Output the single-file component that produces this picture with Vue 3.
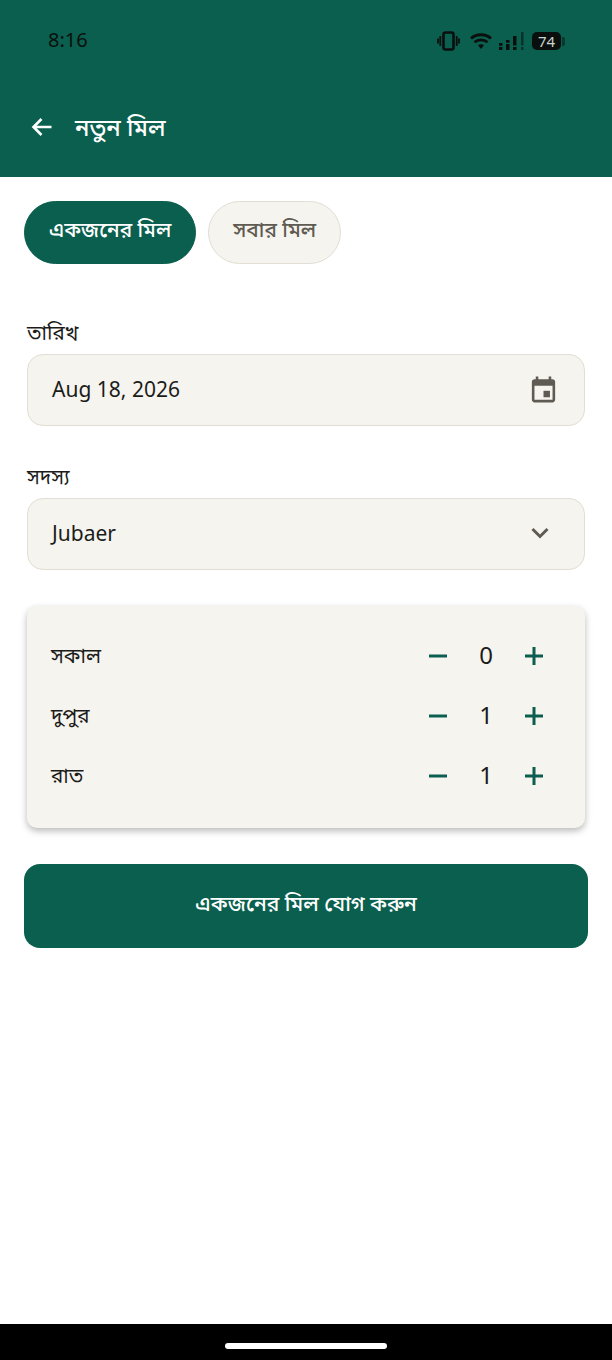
<script setup>
const meals = [
  { name: 'সকাল', count: 0 },
  { name: 'দুপুর', count: 1 },
  { name: 'রাত', count: 1 }
];
</script>

<template>
  <div class="screen">
    <header class="app-header">
      <div class="status-bar">
        <span class="clock">8:16</span>
        <div class="status-icons">
          <svg class="vibrate" width="23" height="20" viewBox="0 0 23 20">
            <rect x="6.5" y="1.5" width="10" height="17" rx="2" fill="none" stroke="#0a0f0d" stroke-width="2.6" />
            <path d="M3.3 5v10M1 7.5v5M19.7 5v10M22 7.5v5" stroke="#0a0f0d" stroke-width="1.8" fill="none" />
          </svg>
          <svg class="wifi" width="22" height="16" viewBox="0 0 22 16">
            <path d="M1 5.5C6.5 .5 15.5 .5 21 5.5M4.5 9.3C8 6 14 6 17.5 9.3" stroke="#0a0f0d" stroke-width="2.8" fill="none" />
            <path d="M8 12.2L11 16l3-3.800C12 11 10 11 8 12.2z" fill="#0a0f0d" />
          </svg>
          <svg class="signal" width="26" height="18" viewBox="0 0 26 18">
            <path d="M0 11h3.500v2.800H0zM0 15h3.500v3H0zM7 8h3.500v2.800H7zM7 12h3.500v6H7zM14 4h3.500v9.500H14zM14 15h3.500v3H14z" fill="#0a0f0d" />
            <path d="M22 0h2.500v13.500H22zM22 15h2.500v3H22z" fill="#0a0f0d" opacity=".55" />
          </svg>
          <div class="battery">
            <span class="battery-body">74</span>
            <span class="battery-tip"></span>
          </div>
        </div>
      </div>
      <div class="title-row">
        <svg class="back-icon" width="24" height="24" viewBox="0 0 24 24">
          <path d="M21.5 12H4M11.5 4L3.500 12l8 8" fill="none" stroke="#fff" stroke-width="2.6" />
        </svg>
        <h1 class="title">নতুন মিল</h1>
      </div>
    </header>

    <main class="content">
      <div class="tabs">
        <button class="tab tab-active">একজনের মিল</button>
        <button class="tab">সবার মিল</button>
      </div>

      <form class="form" @submit.prevent>
        <label class="field-label">তারিখ</label>
        <div class="field">
          <span>Aug 18, 2026</span>
          <svg class="calendar-icon" width="31" height="31" viewBox="0 0 24 24">
            <path d="M19 4h-1V2h-2v2H8V2H6v2H5c-1.100 0-2 .9-2 2v14c0 1.100.9 2 2 2h14c1.100 0 2-.9 2-2V6c0-1.100-.9-2-2-2zm0 16H5V9h14v11z" fill="#5f5b52" />
            <path d="M12 13h5v5h-5z" fill="#5f5b52" />
          </svg>
        </div>

        <label class="field-label member-label">সদস্য</label>
        <div class="field">
          <span>Jubaer</span>
          <svg class="chevron-icon" width="24" height="24" viewBox="0 0 24 24">
            <path d="M4.5 7L12 14.5 19.5 7" fill="none" stroke="#5f5b52" stroke-width="3" />
          </svg>
        </div>

        <section class="meal-card">
          <div v-for="meal in meals" :key="meal.name" class="meal-row">
            <span class="meal-name">{{ meal.name }}</span>
            <div class="stepper">
              <svg width="24" height="24" viewBox="0 0 24 24">
                <path d="M3 12h18" stroke="#0b5e4f" stroke-width="3" />
              </svg>
              <span class="count">{{ meal.count }}</span>
              <svg width="24" height="24" viewBox="0 0 24 24">
                <path d="M3 12h18M12 3v18" stroke="#0b5e4f" stroke-width="3" />
              </svg>
            </div>
          </div>
        </section>
      </form>

      <button class="submit-btn">একজনের মিল যোগ করুন</button>
    </main>

    <footer class="nav-bar">
      <span class="home-indicator"></span>
    </footer>
  </div>
</template>

<style scoped>
.screen {
  display: flex;
  flex-direction: column;
  width: 612px;
  height: 1360px;
  background: #fff;
  font-family: "Noto Sans", "Noto Sans Bengali", "Open Sans", sans-serif;
  color: #1b1c1a;
  overflow: hidden;
}

.app-header {
  height: 177px;
  box-sizing: border-box;
  background: #0a5f4e;
}

.status-bar {
  display: flex;
  justify-content: space-between;
  align-items: center;
  height: 24px;
  padding: 29px 47px 0 48px;
}

.clock {
  margin-bottom: 4px;
  font-size: 20px;
  color: #0a0f0d;
}

.status-icons {
  display: flex;
  align-items: center;
}

.wifi {
  margin-left: 10px;
}

.signal {
  margin-left: 7px;
}

.battery {
  display: flex;
  align-items: center;
  gap: 1px;
  margin-left: 7px;
}

.battery-body {
  width: 29px;
  height: 18px;
  border-radius: 5px;
  background: #0a0f0d;
  color: #c9d4cf;
  font-size: 15px;
  line-height: 18px;
  text-align: center;
}

.battery-tip {
  width: 3px;
  height: 9px;
  border-radius: 0 2px 2px 0;
  background: #0a0f0d;
  opacity: 0.5;
}

.title-row {
  display: flex;
  align-items: center;
  gap: 21px;
  padding: 56px 0 0 30px;
}

.title {
  margin: 0;
  font-size: 23.8px;
  font-weight: 500;
  line-height: 36px;
  color: #fff;
}

.content {
  flex: 1;
  display: flex;
  flex-direction: column;
  padding: 24px 24px 0;
}

.tabs {
  display: flex;
  gap: 12px;
}

.tab {
  height: 63px;
  padding: 0 24px 5px;
  border: 1px solid #e2ded3;
  border-radius: 32px;
  background: #f6f4ef;
  font-family: inherit;
  font-size: 20.8px;
  font-weight: 500;
  color: #5f5b52;
}

.tab-active {
  border-color: #0a5f4e;
  background: #0a5f4e;
  color: #fff;
}

.form {
  display: flex;
  flex-direction: column;
  padding: 0 3px;
}

.field-label {
  height: 37px;
  margin-top: 53px;
  font-size: 20.6px;
  line-height: 30px;
}

.member-label {
  margin-top: 35px;
}

.field {
  display: flex;
  justify-content: space-between;
  align-items: center;
  height: 72px;
  box-sizing: border-box;
  padding: 0 25px 2px 24px;
  border: 1px solid #e2ded3;
  border-radius: 16px;
  background: #f6f4ef;
  font-size: 21px;
}

.chevron-icon {
  margin: 2px 7px 0 0;
}

.meal-card {
  display: flex;
  flex-direction: column;
  height: 222px;
  box-sizing: border-box;
  margin-top: 36px;
  padding: 20px 39px 20px 24px;
  border-radius: 10px;
  background: #f6f4ef;
  box-shadow: 0 3px 7px rgba(0, 0, 0, 0.28);
}

.meal-row {
  display: flex;
  justify-content: space-between;
  align-items: center;
  height: 60px;
}

.meal-name {
  font-size: 20.6px;
}

.stepper {
  display: flex;
  align-items: center;
}

.count {
  width: 72px;
  margin-bottom: 3px;
  font-size: 24px;
  text-align: center;
}

.submit-btn {
  height: 84px;
  margin-top: 36px;
  border: none;
  border-radius: 16px;
  background: #0a5f4e;
  padding-bottom: 4px;
  font-family: inherit;
  font-size: 21px;
  font-weight: 500;
  color: #fff;
}

.nav-bar {
  display: flex;
  justify-content: center;
  height: 36px;
  background: #000;
}

.home-indicator {
  width: 162px;
  height: 6px;
  margin-top: 19px;
  border-radius: 3px;
  background: #fff;
}
</style>
